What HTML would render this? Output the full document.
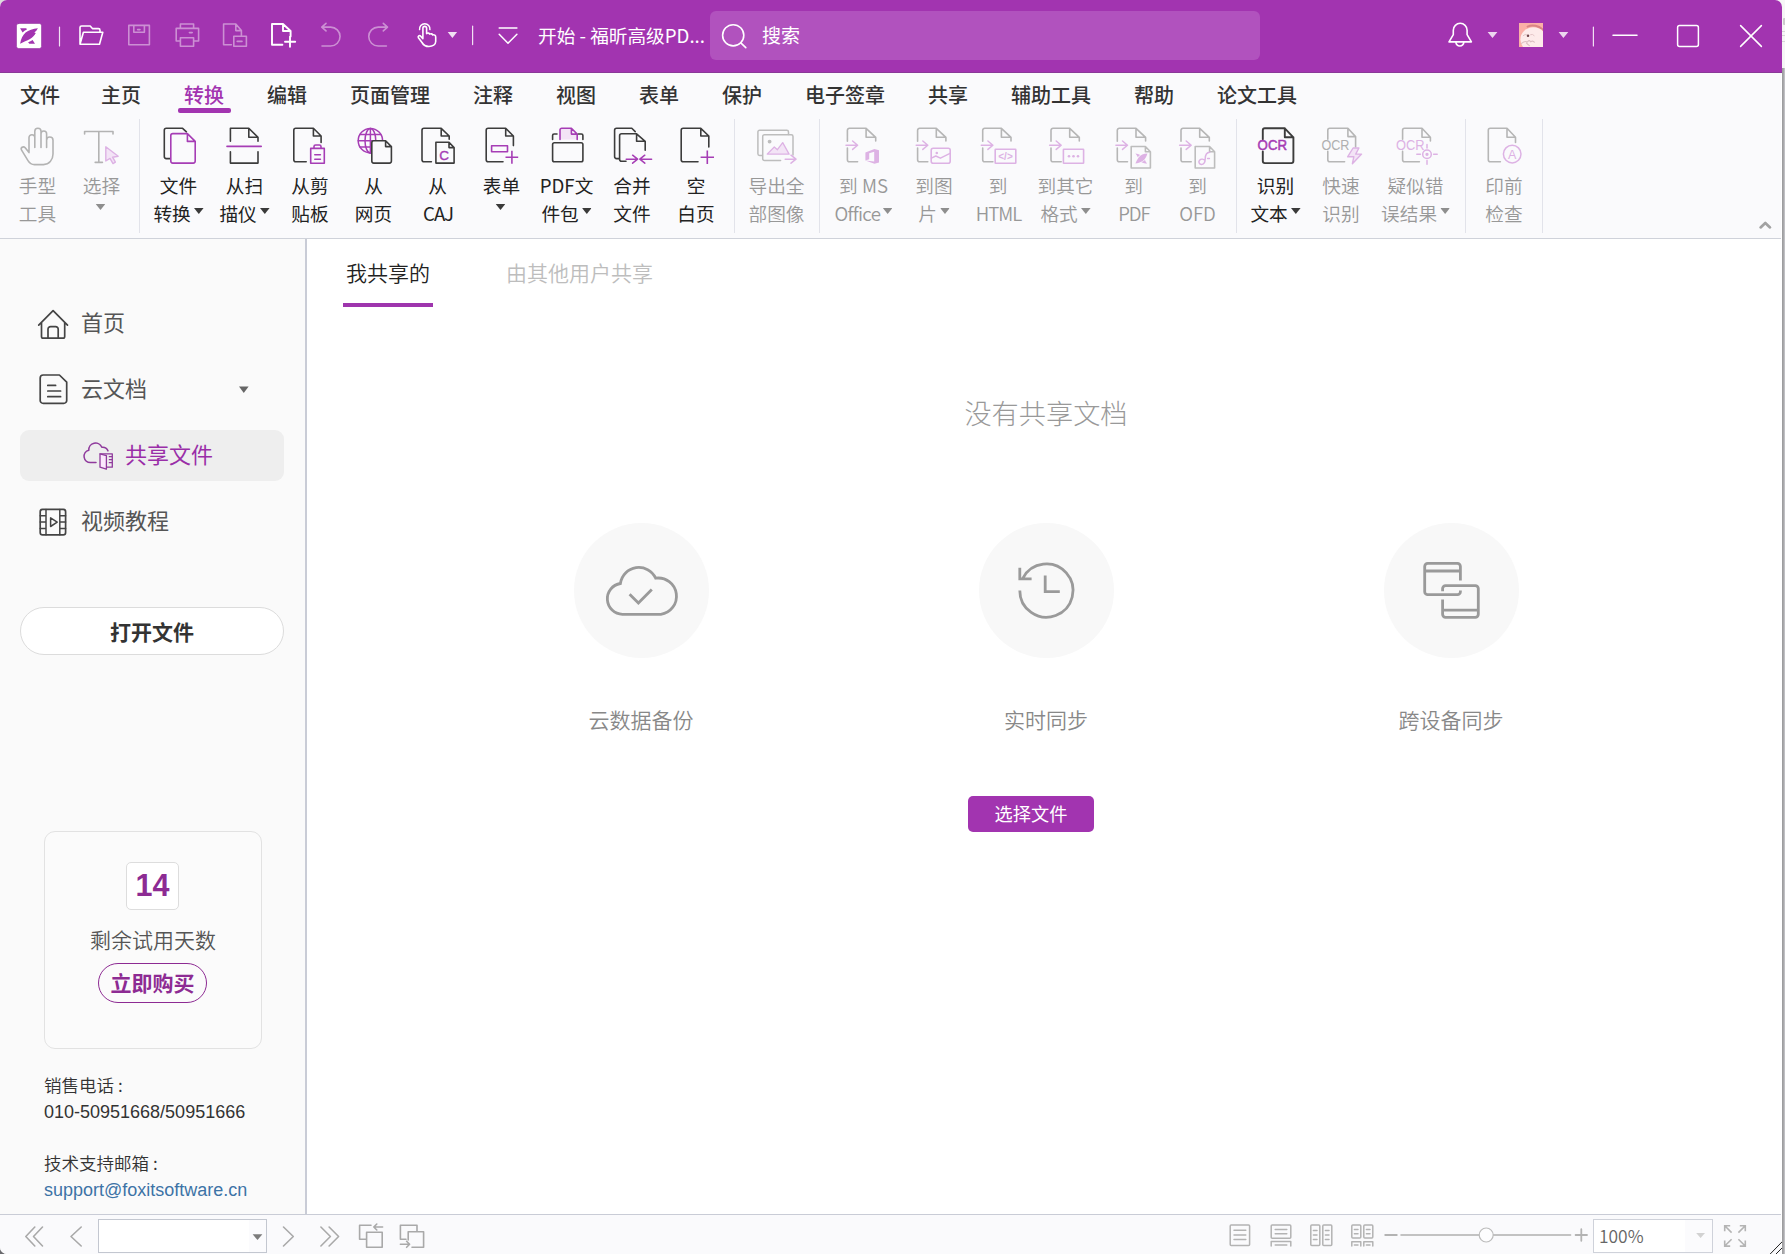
<!DOCTYPE html>
<html lang="zh-CN">
<head>
<meta charset="utf-8">
<title>开始 - 福昕高级PDF编辑器</title>
<style>
html,body{margin:0;padding:0;}
body{width:1785px;height:1254px;overflow:hidden;position:relative;background:#fff;
  font-family:"Liberation Sans","Noto Sans CJK SC",sans-serif;color:#222;}
.cj{font-family:"Noto Sans CJK SC","Liberation Sans",sans-serif;}
.abs{position:absolute;}
#edge{position:absolute;left:1782px;top:68px;width:3px;height:1186px;background:linear-gradient(90deg,#9e9ea0 0,#9e9ea0 1px,#a9a9ab 1px,#a9a9ab 2px,#c0c0c4 2px,#c0c0c4 3px);}
#edgew{position:absolute;left:1781px;top:74px;width:1px;height:1180px;background:#fff;}
#edgetop{position:absolute;left:1772px;top:0;width:13px;height:68px;background:#f6f6f6;}
#win{position:absolute;left:0;top:0;width:1782px;height:1254px;background:#fff;overflow:hidden;border-radius:7px 7px 0 7px;}
#cornerbl{position:absolute;left:0;top:1244px;width:10px;height:10px;background:#6a6a6e;}
#cornertl{position:absolute;left:0;top:0;width:10px;height:10px;background:#dcdcdc;}
#title{position:absolute;left:0;top:0;width:1782px;height:73px;background:#a234b0;border-bottom:1px solid #8a3898;box-sizing:border-box;}
#title .t{position:absolute;color:#fff;white-space:nowrap;}
#search{position:absolute;left:710px;top:11px;width:550px;height:49px;border-radius:6px;background:#b152be;}
#menubar{position:absolute;left:0;top:73px;width:1782px;height:165px;background:#fafafc;border-bottom:1px solid #cfd2da;}
.mi{position:absolute;top:79px;height:32px;line-height:32px;font-size:20px;font-weight:500;color:#333;white-space:nowrap;font-family:"Noto Sans CJK SC","Liberation Sans",sans-serif;}
.mi.on{color:#a234b0;}
#menuul{position:absolute;left:178px;top:108.4px;width:53px;height:4.2px;border-radius:2px;background:#a234b0;}
.rsep{position:absolute;top:119px;width:1px;height:114px;background:#e2e3ea;}
.rb{position:absolute;top:171px;transform:translateX(-50%);text-align:center;font-size:18.67px;line-height:28px;color:#222;white-space:nowrap;font-family:"Noto Sans CJK SC","Liberation Sans",sans-serif;}
.rb.d{color:#989898;font-weight:350;}
.rb i{display:inline-block;width:9.6px;height:6px;margin-left:3.3px;background:#3a3a3a;clip-path:polygon(0 0,100% 0,50% 100%);vertical-align:middle;position:relative;top:-5px;}
.rb.d i{background:#8e8e8e;}
.rb i.s{margin-left:-2px;top:-9px;}
#side{position:absolute;left:0;top:239px;width:305px;height:975px;background:#fafafa;border-right:2px solid #c9ccd6;}
.si{position:absolute;left:81px;font-size:22px;line-height:30px;height:30px;color:#555;white-space:nowrap;font-family:"Noto Sans CJK SC","Liberation Sans",sans-serif;}
#sel{position:absolute;left:20px;top:430px;width:264px;height:51px;border-radius:9px;background:#eeeeee;}
#openbtn{position:absolute;left:20px;top:607px;width:262px;height:46px;border:1px solid #dcdcdc;border-radius:24px;background:#fff;text-align:center;line-height:46px;font-size:21px;font-weight:bold;color:#333;font-family:"Noto Sans CJK SC","Liberation Sans",sans-serif;}
#trial{position:absolute;left:44px;top:831px;width:216px;height:216px;border:1px solid #e2e2e2;border-radius:11px;background:#fbfbfb;}
#daybox{position:absolute;left:126px;top:862px;width:51px;height:46px;border:1px solid #dddddd;border-radius:5px;background:#fff;text-align:center;line-height:44px;font-size:30.5px;font-weight:bold;color:#8d2b93;font-family:"Liberation Sans",sans-serif;}
#trialtxt{position:absolute;left:44px;top:923.5px;width:218px;text-align:center;font-size:21px;line-height:30px;color:#555;font-weight:350;font-family:"Noto Sans CJK SC","Liberation Sans",sans-serif;}
#buy{position:absolute;left:98px;top:963px;width:107px;height:38px;border:1.5px solid #8d2b93;border-radius:21px;text-align:center;line-height:37px;font-size:21px;font-weight:bold;color:#8d2b93;font-family:"Noto Sans CJK SC","Liberation Sans",sans-serif;}
.ct.cj{font-weight:350;}
.ct{position:absolute;left:44px;font-size:18px;line-height:26px;height:26px;color:#333;white-space:nowrap;}
#main{position:absolute;left:307px;top:239px;width:1475px;height:975px;background:#fff;}
.tab{position:absolute;top:256px;font-weight:350;font-size:21px;line-height:32px;white-space:nowrap;font-family:"Noto Sans CJK SC","Liberation Sans",sans-serif;}
#tabul{position:absolute;left:343px;top:303px;width:90px;height:4px;background:#9e35ad;}
#empty{position:absolute;left:746px;top:392px;width:600px;text-align:center;font-size:27.2px;line-height:40px;color:#999;font-weight:300;font-family:"Noto Sans CJK SC","Liberation Sans",sans-serif;}
.circ{position:absolute;top:523px;width:135px;height:135px;border-radius:50%;background:#f8f8f8;}
.flab{position:absolute;top:704px;width:300px;text-align:center;font-size:21px;line-height:30px;color:#888;font-weight:350;font-family:"Noto Sans CJK SC","Liberation Sans",sans-serif;}
#pick{position:absolute;left:968px;top:796px;width:126px;height:36px;border-radius:5px;background:#a234b0;color:#fff;text-align:center;line-height:35px;font-size:18.2px;font-family:"Noto Sans CJK SC","Liberation Sans",sans-serif;}
#status{position:absolute;left:0;top:1214px;width:1782px;height:40px;background:#fafafc;border-top:1px solid #c9ccd6;box-sizing:border-box;}
#pgbox{position:absolute;left:98px;top:1219px;width:167px;height:32px;border:1px solid #c3c7d0;background:linear-gradient(90deg,#fff 0,#fff 150px,#fbfbfd 150px);}
#zmbox{position:absolute;left:1593px;top:1219px;width:118px;height:32px;border:1px solid #cfd2da;background:linear-gradient(90deg,#fff 0,#fff 91px,#fbfbfd 91px);}
#zmtxt{position:absolute;left:1599px;top:1223px;font-size:17.4px;line-height:26px;color:#666;font-weight:350;font-family:"Noto Sans CJK SC","Liberation Sans",sans-serif;}
#ico{position:absolute;left:0;top:0;width:1785px;height:1254px;pointer-events:none;}
</style>
</head>
<body>
<div id="edgetop"></div>
<div id="edge"></div>
<div style="position:absolute;left:1783px;top:18px;width:2px;height:7px;background:#cbcbcb;border-radius:1px 0 0 1px"></div>
<div style="position:absolute;left:1782px;top:31px;width:3px;height:1px;background:#d6d6d6"></div>
<div style="position:absolute;left:1782px;top:35px;width:3px;height:1px;background:#d6d6d6"></div>
<div style="position:absolute;left:1782px;top:41px;width:3px;height:1px;background:#d6d6d6"></div>
<div id="cornertl"></div>
<div id="cornerbl"></div>
<div id="win">
<div id="title">
  <div id="search"></div>
  <div class="t cj" style="left:538px;top:21px;font-size:18.67px;line-height:28px;">开始 - 福昕高级PD...</div>
  <div class="t cj" style="left:762px;top:21px;font-size:19px;line-height:28px;">搜索</div>
</div>
<div id="menubar"></div>
<div class="mi" style="left:20px">文件</div>
<div class="mi" style="left:101px">主页</div>
<div class="mi on" style="left:184px">转换</div>
<div class="mi" style="left:267px">编辑</div>
<div class="mi" style="left:350px">页面管理</div>
<div class="mi" style="left:473px">注释</div>
<div class="mi" style="left:556px">视图</div>
<div class="mi" style="left:639px">表单</div>
<div class="mi" style="left:722px">保护</div>
<div class="mi" style="left:805px">电子签章</div>
<div class="mi" style="left:928px">共享</div>
<div class="mi" style="left:1011px">辅助工具</div>
<div class="mi" style="left:1134px">帮助</div>
<div class="mi" style="left:1217px">论文工具</div>
<div id="menuul"></div>

<div class="rsep" style="left:139px"></div>
<div class="rsep" style="left:734px"></div>
<div class="rsep" style="left:819px"></div>
<div class="rsep" style="left:1236px"></div>
<div class="rsep" style="left:1465px"></div>
<div class="rsep" style="left:1542px"></div>

<div class="rb d" style="left:37.5px">手型<br>工具</div>
<div class="rb d" style="left:101.5px">选择<br><i class="s"></i></div>
<div class="rb" style="left:178.5px">文件<br>转换<i></i></div>
<div class="rb" style="left:244.5px">从扫<br>描仪<i></i></div>
<div class="rb" style="left:310px">从剪<br>贴板</div>
<div class="rb" style="left:373.5px">从<br>网页</div>
<div class="rb" style="left:437.5px">从<br><span style="letter-spacing:-1.1px;margin-right:-1.1px">CAJ</span></div>
<div class="rb" style="left:501.5px">表单<br><i class="s"></i></div>
<div class="rb" style="left:566.5px">PDF文<br>件包<i></i></div>
<div class="rb" style="left:632px">合并<br>文件</div>
<div class="rb" style="left:696px">空<br>白页</div>
<div class="rb d" style="left:776.5px">导出全<br>部图像</div>
<div class="rb d" style="left:863.5px">到 MS<br><span style="letter-spacing:-0.7px;margin-right:-0.7px">Office</span><i></i></div>
<div class="rb d" style="left:934px">到图<br>片<i></i></div>
<div class="rb d" style="left:998px">到<br><span style="letter-spacing:-1px;margin-right:-1px">HTML</span></div>
<div class="rb d" style="left:1065.5px">到其它<br>格式<i></i></div>
<div class="rb d" style="left:1133.5px">到<br><span style="letter-spacing:-1px;margin-right:-1px">PDF</span></div>
<div class="rb d" style="left:1197.5px">到<br>OFD</div>
<div class="rb" style="left:1275.5px">识别<br>文本<i></i></div>
<div class="rb d" style="left:1341px">快速<br>识别</div>
<div class="rb d" style="left:1415.5px">疑似错<br>误结果<i></i></div>
<div class="rb d" style="left:1504px">印前<br>检查</div>

<div id="side"></div>
<div class="si" style="top:306px">首页</div>
<div class="si" style="top:372px">云文档</div>
<div id="sel"></div>
<div class="si" style="top:438px;left:125px;color:#9a2ea8">共享文件</div>
<div class="si" style="top:504px">视频教程</div>
<div id="openbtn">打开文件</div>
<div id="trial"></div>
<div id="daybox">14</div>
<div id="trialtxt">剩余试用天数</div>
<div id="buy">立即购买</div>
<div class="ct cj" style="top:1072px;font-size:17.5px">销售电话<span style="margin-left:4px">:</span></div>
<div class="ct" style="top:1099px">010-50951668/50951666</div>
<div class="ct cj" style="top:1150px;font-size:17.5px">技术支持邮箱<span style="margin-left:4px">:</span></div>
<div class="ct" style="top:1177px;color:#3d73a6">support@foxitsoftware.cn</div>

<div id="main"></div>
<div class="tab" style="left:346px;color:#222">我共享的</div>
<div class="tab" style="left:506px;color:#bdbdbd">由其他用户共享</div>
<div id="tabul"></div>
<div id="empty">没有共享文档</div>
<div class="circ" style="left:574px"></div>
<div class="circ" style="left:979px"></div>
<div class="circ" style="left:1384px"></div>
<div class="flab" style="left:491px">云数据备份</div>
<div class="flab" style="left:896px">实时同步</div>
<div class="flab" style="left:1301px">跨设备同步</div>
<div id="pick">选择文件</div>

<div id="status"></div>
<div id="edgew"></div>
<div id="pgbox"></div>
<div id="zmbox"></div>
<div id="zmtxt">100%</div>
<svg id="ico" width="1785" height="1254" viewBox="0 0 1785 1254" fill="none" stroke-linecap="round" stroke-linejoin="round">
<!-- title bar icons -->
<g stroke="#fff" stroke-width="1.6">
  <rect x="16.5" y="23.5" width="25" height="25" rx="2.2" fill="#fff" stroke="#8f2d9c" stroke-opacity=".55" stroke-width="1"/>
  <g fill="#a234b0" stroke="none">
    <path d="M37.9 28.2 C33 28.6 28.5 30.2 25.6 32.6 C22.6 35.2 21 39 20.1 43.8 C23.5 41.8 27 40.6 30 39 C32.6 37.6 34.6 35.6 35.8 33.1 L34.3 32.6 C35.8 31.4 37 30 37.9 28.2 Z"/>
    <path d="M20.1 28.2 H26.3 L26.9 29.5 C25.2 30.3 23.8 31.3 22.6 32.5 Z"/>
    <path d="M32.6 39.9 L35 43.7 H29.3 L28.1 42.3 C29.8 41.7 31.3 40.9 32.6 39.9 Z"/>
  </g>
  <path d="M59.5 27 V46" stroke-width="1.2" opacity=".85"/>
  <!-- open folder -->
  <path d="M80 44 V27.6 a1.6 1.6 0 0 1 1.6-1.6 H90.2 l2.2 2.6 H98.4 a1.6 1.6 0 0 1 1.6 1.6 V32.2 M80 44.2 L83.4 32.3 H102.8 L99.5 44.2 Z"/>
  <g opacity=".45">
    <!-- save -->
    <path d="M128.8 25.4 H149.4 V44.8 H128.8 Z M133.8 25.4 V32.2 H144.4 V25.4 M137.6 29.6 H140"/>
    <!-- print -->
    <path d="M180.4 28.4 V24 H193.6 V28.4 M180.4 41 H176.2 V28.4 H198.6 V41 H193.6 M180.4 37.8 H193.6 V46.2 H180.4 Z M189.4 32.6 H192.2"/>
    <!-- doc minus -->
    <path d="M231.4 44.8 H223.6 V24 H235.8 L241.4 30.6 V36 M235.8 24 V30.6 H241.4 M233.8 36.2 H246.4 V46.2 H233.8 Z M237.2 41.4 H242"/>
  </g>
  <!-- new doc -->
  <path d="M282.4 44.8 H272 V24 H283 L290.6 31 V36.6 M283 24 V31 H290.6 M290 36.6 V46.8 M285 41.7 H295.2" stroke-width="1.9"/>
  <g opacity=".45">
    <path d="M322 46 H330.6 a9.45 9.45 0 0 0 0-18.9 H321.8 M326 23.3 L321.8 27.1 L326 30.9"/>
    <path d="M386.4 46 H378.2 a9.45 9.45 0 0 1 0-18.9 H387.4 M383.3 23.3 L387.5 27.1 L383.3 30.9"/>
  </g>
  <!-- touch hand -->
  <path d="M419.6 29.6 a5.2 5.2 0 1 1 10.3 0" stroke-width="1.5"/>
  <path d="M422.9 38 V28.2 a1.85 1.85 0 0 1 3.7 0 V33.6 c1.1-.9 2.7-.6 3.1.5 c1.2-.7 2.6-.2 3 .8 c1.6-.4 3 .5 3 2 V41.6 c0 3-3 4.9-6.8 4.9 c-3.4 0-5.4-1.2-6.9-4 L418.4 37.8 c-.8-1.6 1-2.8 2.3-1.6 L422.9 38.6" stroke-width="1.6"/>
  <path d="M447.7 32.1 H457.1 L452.4 37.9 Z" fill="#fff" stroke="none" opacity=".85"/>
  <path d="M472.6 26.2 V44.6" stroke-width="1.2" opacity=".85"/>
  <path d="M499.2 28.1 H516.9 M499.2 34.2 L508 43.2 L516.9 34.2" stroke-width="1.5"/>
  <!-- search -->
  <circle cx="733.2" cy="35.3" r="10.6" stroke-width="1.6"/>
  <path d="M740.8 42.8 L745.8 47.6" stroke-width="1.6"/>
  <!-- bell -->
  <path d="M1449 41.9 L1453.3 34.6 V30.2 a6.9 6.9 0 0 1 13.8 0 V34.6 L1471.4 41.9 Z M1455.8 42.2 a4.1 4.5 0 0 0 8.1 0" stroke-width="1.6"/>
  <path d="M1487.6 32.1 H1497.4 L1492.5 38 Z M1558.6 32.1 H1568.3 L1563.4 38 Z" fill="#fff" stroke="none" opacity=".8"/>
  <path d="M1593.4 27 V46" stroke-width="1.2" opacity=".85"/>
  <path d="M1613 35.2 H1637" stroke-width="1.5"/>
  <rect x="1677.6" y="25.6" width="20.8" height="20.8" rx="2" stroke-width="1.5"/>
  <path d="M1740.6 25.6 L1761.4 46.4 M1761.4 25.6 L1740.6 46.4" stroke-width="1.5"/>
</g>
<!-- avatar -->
<defs><clipPath id="avc"><rect x="1519" y="23" width="24" height="24"/></clipPath></defs>
<g stroke="none" clip-path="url(#avc)">
  <rect x="1519" y="23" width="24" height="24" fill="#fbb0a6"/>
  <path d="M1527.6 26.6 C1532 24.6 1539 25.4 1543.4 30.2" stroke="#d98484" stroke-width="2" fill="none"/>
  <ellipse cx="1533.4" cy="39.6" rx="13" ry="12.4" fill="#fdebea"/>
  <circle cx="1528" cy="35.8" r="1.25" fill="#6d4248"/>
  <path d="M1523.2 35.6 q2-2 3.6-.8 M1530.6 34.6 q2-1 3.6 1" stroke="#e3c4c6" stroke-width="1" fill="none"/>
  <path d="M1521.5 43.4 q3.4-3 6-1.4 q1.4-2.6 3.2-.2 q2-1.6 3.6.4 M1526.4 43 q1.6 1.6 3 2.6" stroke="#dcc0c2" stroke-width="1.1" fill="none"/>
</g>
<!-- ribbon icons group 1 -->
<g stroke-width="1.6" font-family="Liberation Sans, sans-serif">
  <!-- hand tool (disabled) -->
  <path stroke="#b3b3b3" stroke-width="1.6" d="M29 152.6 V137.6 a2.9 2.9 0 0 1 5.8 0 V147.5 M34.8 137.6 V131.3 a3.1 3.1 0 0 1 6.2 0 V147.5 M41 133.8 a2.8 2.8 0 0 1 5.6 0 V147.5 M46.6 140.2 a3.2 3.2 0 0 1 6.4 0 V154 c0 6-4 10.6-9.5 10.6 H34.5 c-3 0-5-1.5-6.5-4 L21.6 150.2 c-1.4-2.4 1.6-4.6 3.6-2.4 L29 152.6"/>
  <!-- select text (disabled) -->
  <path stroke="#b3b3b3" stroke-width="1.6" d="M84.6 134 V131.5 H113 V134 M98.8 131.5 V162.4 M95.2 162.4 H102.4"/>
  <path stroke="#ddb2e4" stroke-width="1.4" fill="#f3e4f6" d="M105.8 146.8 V161 L110 158.4 L113 163.6 L115.4 162.2 L112.6 157.2 L118.2 156.2 Z"/>
  <!-- file convert -->
  <path stroke="#3c3c3c" d="M170 158.6 H166.3 a2 2 0 0 1 -2-2 V130.3 a2 2 0 0 1 2-2 H182.6 L186.4 131.8"/>
  <path stroke="#a63db5" d="M172.8 133.6 H187.4 L195.2 141.4 V161.1 a2 2 0 0 1 -2 2 H172.8 a2 2 0 0 1 -2-2 V135.6 a2 2 0 0 1 2-2 Z M187.4 133.6 V141.4 H195.2"/>
  <!-- from scanner -->
  <path stroke="#3c3c3c" d="M230.4 141.2 V128.3 H248.8 L258 137.3 V141.2 M248.8 128.3 V137.3 H258 M230.4 151.8 V163.1 H258 V151.8"/>
  <path stroke="#a63db5" d="M227 146.4 H261.2"/>
  <!-- from clipboard -->
  <path stroke="#3c3c3c" d="M306.2 161.8 H295.8 a2 2 0 0 1 -2-2 V130.3 a2 2 0 0 1 2-2 H313.4 L321.1 136 V142.4 M313.4 128.3 V136 H321.1"/>
  <path stroke="#a63db5" d="M310.7 148.4 H324.3 V163.3 H310.7 Z M314 148.2 V146.6 a1.6 1.6 0 0 1 1.6-1.6 H319.4 a1.6 1.6 0 0 1 1.6 1.6 V148.2 M314.8 154.7 H320.4 M314.8 159.2 H320.4"/>
  <!-- from web -->
  <g stroke="#a63db5" stroke-width="1.5">
    <circle cx="370.4" cy="140.7" r="12.2"/>
    <ellipse cx="370.4" cy="140.7" rx="5.4" ry="12.2"/>
    <path d="M358.2 140.7 H382.6 M360 134.4 H380.8 M360 147 H380.8 M370.4 128.5 V152.9"/>
  </g>
  <path stroke="#3c3c3c" fill="#fafafc" d="M373.8 140.7 H385.6 L391.4 146.6 V161.1 a2 2 0 0 1 -2 2 H373.8 a2 2 0 0 1 -2-2 V142.7 a2 2 0 0 1 2-2 Z M385.6 140.7 V146.6 H391.4"/>
  <!-- from CAJ -->
  <path stroke="#3c3c3c" d="M431.4 161.8 H424 a2 2 0 0 1 -2-2 V130.3 a2 2 0 0 1 2-2 H441.2 L449.2 136 V139.2 M441.2 128.3 V136 H449.2"/>
  <path stroke="#3c3c3c" d="M435.9 142.3 H449 L454.1 147.6 V163.1 H435.9 Z M449 142.3 V147.6 H454.1"/>
  <text x="444" y="159.6" font-size="13.5" fill="#a63db5" stroke="#a63db5" stroke-width="0.4" text-anchor="middle">C</text>
  <!-- form -->
  <path stroke="#3c3c3c" d="M503 161.8 H488.2 a2 2 0 0 1 -2-2 V130.3 a2 2 0 0 1 2-2 H505.7 L513.4 136 V145.6 M505.7 128.3 V136 H513.4"/>
  <path stroke="#a63db5" d="M491.6 145.8 H507.5 V151.7 H491.6 Z "/>
  <path stroke="#a63db5" stroke-linecap="butt" d="M511.9 150.8 V163.8 M505.5 157.3 H518.2"/>
  <!-- pdf portfolio -->
  <path stroke="#a63db5" fill="#f3e4f6" d="M560 139.5 V130 a1.7 1.7 0 0 1 1.7-1.7 H571.4 L577.2 134.1 V139.5 M571.4 128.3 V134.1 H577.2"/>
  <path stroke="#3c3c3c" d="M552.6 139.4 V135.5 a1.5 1.5 0 0 1 1.5-1.5 H557 M578.4 134 H581.4 a1.5 1.5 0 0 1 1.5 1.5 V139.4"/>
  <rect stroke="#3c3c3c" x="552.6" y="142.8" width="30.3" height="19" rx="1.8"/>
  <!-- merge -->
  <path stroke="#3c3c3c" d="M619 158.6 H616.6 a2 2 0 0 1 -2-2 V130.3 a2 2 0 0 1 2-2 H631.8 L635.2 131.6"/>
  <path stroke="#3c3c3c" d="M626 161.3 H621.6 a2 2 0 0 1 -2-2 V135.8 a2 2 0 0 1 2-2 H636.6 L645.2 141.3 V150.2 M636.6 133.8 V141.3 H645.2"/>
  <path stroke="#a63db5" stroke-width="1.5" d="M626.2 159.2 H637.6 M632.6 155.2 L637.6 159.2 L632.6 163.2 M651.6 159.2 H639.8 M644.8 155.2 L639.8 159.2 L644.8 163.2"/>
  <!-- blank page -->
  <path stroke="#3c3c3c" d="M698 161.8 H683.2 a2 2 0 0 1 -2-2 V130.3 a2 2 0 0 1 2-2 H700.8 L708.8 136 V147 M700.8 128.3 V136 H708.8"/>
  <path stroke="#a63db5" stroke-linecap="butt" d="M707.3 150.6 V163.9 M700.6 157.3 H714"/>
  <!-- export all images (disabled) -->
  <g stroke="#bdbdbd" stroke-width="1.5">
    <path d="M762.4 155.4 H759.6 a1.7 1.7 0 0 1 -1.7-1.7 V131.9 a1.7 1.7 0 0 1 1.7-1.7 H786.8 a1.7 1.7 0 0 1 1.7 1.7 V134.6"/>
    <path d="M780.6 160.5 H764.4 a1.7 1.7 0 0 1 -1.7-1.7 V136.5 a1.7 1.7 0 0 1 1.7-1.7 H791.3 a1.7 1.7 0 0 1 1.7 1.7 V155"/>
    <circle cx="769.6" cy="141.6" r="1.2" fill="#bdbdbd"/>
  </g>
  <path stroke="#ddb2e4" stroke-width="1.3" fill="#f3e4f6" d="M767.2 154.1 L774.3 147 L777.4 149.7 L782.7 142.6 L789.1 154.1 Z"/>
  <path stroke="#ddb2e4" stroke-width="1.5" d="M785.2 159.2 H796 M791 155.2 L796 159.2 L791 163.2"/>
</g>
<!-- ribbon icons group 2 : export (disabled) -->
<defs>
  <g id="todoc">
    <path stroke="#b6b6b6" d="M10.2 161.8 H2 a2 2 0 0 1 -2-2 V148 M0 141.2 V130.3 a2 2 0 0 1 2-2 H18.7 L28.3 137.3 V141 M18.7 128.3 V137.3 H28.3"/>
    <path stroke="#ddb2e4" stroke-width="1.5" d="M-1.4 145.2 H10.2 M5.2 141 L10.2 145.2 L5.2 149.4"/>
  </g>
</defs>
<g stroke-width="1.6" font-family="Liberation Sans, sans-serif">
  <use href="#todoc" x="847.4"/>
  <path fill="#ddb2e4" stroke="none" fill-rule="evenodd" d="M865.4 152.6 L874.4 149 L879 150.3 V162.6 L874.4 163.8 L865.4 160.6 L874.2 161.6 V151.8 L869.2 153.2 V159.2 L865.4 160.6 Z"/>
  <use href="#todoc" x="917.6"/>
  <rect stroke="#ddb2e4" x="931.2" y="148.3" width="19" height="15" rx="2"/>
  <circle cx="936.8" cy="153" r="1.3" fill="#ddb2e4" stroke="none"/>
  <path stroke="#ddb2e4" stroke-width="1.4" d="M931.4 158.2 L935.8 156 L940.4 158.2 L950 153.4"/>
  <use href="#todoc" x="982.7"/>
  <rect stroke="#ddb2e4" x="995.2" y="149.2" width="20.6" height="14" rx="0.5"/>
  <text x="1005.5" y="160" font-size="10" font-weight="bold" fill="#ddb2e4" stroke="none" text-anchor="middle">&lt;/&gt;</text>
  <use href="#todoc" x="1051"/>
  <rect stroke="#ddb2e4" x="1063.4" y="149.2" width="20.2" height="14" rx="0.5"/>
  <g fill="#ddb2e4" stroke="none"><circle cx="1069" cy="156.3" r="1.3"/><circle cx="1073.5" cy="156.3" r="1.3"/><circle cx="1078" cy="156.3" r="1.3"/></g>
  <use href="#todoc" x="1117.3"/>
  <path stroke="#bdbdbd" fill="#fafafc" d="M1131.2 146.5 H1145.4 L1150.4 151.8 V168 H1131.2 Z M1145.4 146.5 V151.8 H1150.4"/>
  <g fill="#ddb2e4" stroke="none">
    <path d="M1147.4 153.6 C1143.6 153.8 1140.6 155 1138.6 157.6 C1137.2 159.6 1136.2 161.8 1135.4 163.6 C1137.8 162.9 1140.2 162.5 1142.4 161.2 C1145.2 159.5 1146.6 156.8 1147.4 153.6 Z"/>
    <path d="M1135.4 153.4 C1137.2 153.5 1138.8 154 1140.2 155 C1139.2 155.6 1138.4 156.3 1137.8 157.2 C1137.2 155.8 1136.4 154.5 1135.4 153.4 Z"/>
    <path d="M1141.4 162.2 C1142.8 161.7 1144 161 1145 160.1 C1145.4 161.5 1146.2 162.7 1147.2 163.6 C1145.1 163.6 1143.2 163.1 1141.4 162.2 Z"/>
  </g>
  <use href="#todoc" x="1181"/>
  <path stroke="#bdbdbd" fill="#fafafc" d="M1195.2 146.5 H1209.6 L1214.6 151.8 V168 H1195.2 Z M1209.6 146.5 V151.8 H1214.6"/>
  <path stroke="#ddb2e4" stroke-width="1.5" d="M1209.8 152.2 C1205.4 152.4 1205.2 156 1205.2 159 C1205.2 162.6 1203.6 164.6 1201.2 164.4 C1199 164.2 1198.2 161.6 1199.6 160.2 C1201 158.8 1203.6 159.2 1205 160.4 M1207.6 158.6 H1209.4"/>
</g>
<!-- ribbon icons group 3 : OCR -->
<g stroke-width="1.7" font-family="Liberation Sans, sans-serif">
  <path stroke="#3c3c3c" stroke-width="1.9" d="M1262.8 139.2 V130.3 a2 2 0 0 1 2-2 H1284.8 L1293.4 137.3 V161.1 a2 2 0 0 1 -2 2 H1264.8 a2 2 0 0 1 -2-2 V151.4 M1284.8 128.3 V137.3 H1293.4"/>
  <text x="1257.6" y="150.2" font-size="13.8" fill="#a63db5" stroke="#a63db5" stroke-width="0.5" textLength="29.4" lengthAdjust="spacingAndGlyphs">OCR</text>
  <!-- quick ocr (disabled) -->
  <path stroke="#b6b6b6" stroke-width="1.6" d="M1327.8 139.2 V130.3 a2 2 0 0 1 2-2 H1347.9 L1355.6 136.6 V147 M1347.9 128.3 V136.6 H1355.6 M1327.8 151.4 V159.8 a2 2 0 0 0 2 2 H1344.6"/>
  <text x="1321.4" y="150.2" font-size="13.8" fill="#b0b0b0" stroke="none" textLength="28" lengthAdjust="spacingAndGlyphs">OCR</text>
  <path stroke="#ddb2e4" stroke-width="1.4" fill="#f3e4f6" d="M1353.1 148 H1358.9 L1355.7 154.1 H1361.6 L1352.4 163.7 L1353.8 156.8 H1347.6 Z"/>
  <!-- suspect (disabled) -->
  <path stroke="#b6b6b6" stroke-width="1.6" d="M1402.6 139.2 V130.3 a2 2 0 0 1 2-2 H1422 L1430.4 137.3 V141 M1422 128.3 V137.3 H1430.4 M1402.6 151.4 V159.8 a2 2 0 0 0 2 2 H1419.4"/>
  <text x="1396" y="150.2" font-size="13.8" fill="#ddb2e4" stroke="none" textLength="28.6" lengthAdjust="spacingAndGlyphs">OCR</text>
  <g stroke="#ddb2e4" stroke-width="1.5">
    <circle cx="1427" cy="154.3" r="4.3"/>
    <path d="M1427 144.4 V148 M1427 160.6 V164.2 M1416.8 154.3 H1420.4 M1433.6 154.3 H1437.2"/>
    <circle cx="1427" cy="154.3" r="0.9" fill="#ddb2e4"/>
  </g>
  <!-- preflight (disabled) -->
  <path stroke="#b6b6b6" stroke-width="1.6" d="M1500.4 161.8 H1490.3 a2 2 0 0 1 -2-2 V130.3 a2 2 0 0 1 2-2 H1507 L1515.5 137.3 V142.4 M1507 128.3 V137.3 H1515.5"/>
  <circle cx="1512.2" cy="154.1" r="8.8" stroke="#ddb2e4" stroke-width="1.5"/>
  <text x="1512.2" y="158.6" font-size="12.5" fill="#ddb2e4" stroke="none" text-anchor="middle">A</text>
  <!-- collapse chevron -->
  <path stroke="#a2a2a2" stroke-width="2.7" d="M1760.6 227.4 L1765.3 222.9 L1770 227.4"/>
</g>
<!-- sidebar icons -->
<g stroke="#444" stroke-width="1.7">
  <path d="M38.7 325.2 L53.1 310.6 L67.5 325.2 M41.5 322.8 V336.4 a1.7 1.7 0 0 0 1.7 1.7 H63 a1.7 1.7 0 0 0 1.7-1.7 V322.8 M48 338 V329.2 a2.6 2.6 0 0 1 2.6-2.6 H55.6 a2.6 2.6 0 0 1 2.6 2.6 V338"/>
  <path d="M43.2 375 H59.4 L66.7 382.2 V400.4 a3 3 0 0 1 -3 3 H43.2 a3 3 0 0 1 -3-3 V378 a3 3 0 0 1 3-3 Z M47.8 385.4 H55.6 M47.8 391 H60.6 M47.8 396.7 H60.6"/>
  <rect x="40.2" y="509.4" width="25.4" height="25.4" rx="2.4"/>
  <path d="M46 509.4 V534.8 M59.8 509.4 V534.8 M40.2 515.7 H46 M40.2 522.1 H46 M40.2 528.5 H46 M59.8 515.7 H65.6 M59.8 522.1 H65.6 M59.8 528.5 H65.6 M50.6 517.9 V526.5 L57.2 522.2 Z" stroke-width="1.5"/>
  <path d="M239 386.5 H248.6 L243.8 393 Z" fill="#666" stroke="none"/>
</g>
<g stroke="#8f3a9c" stroke-width="1.5">
  <path d="M96 462.6 H90.5 A6.3 6.3 0 0 1 88.8 450.2 A6.75 6.75 0 0 1 101.8 447.3 A6 6 0 0 1 108 450.9"/>
  <path d="M100 453.8 H112.3 V467.2 H106.6" stroke-width="1.3"/>
  <path d="M100 453.8 L106.4 455.6 V469.2 L100 467.2 Z" fill="#fbe8fd" stroke-width="1.3"/>
  <path d="M108.8 456.7 H112.3 M108.8 459.7 H112.3 M108.8 462.7 H112.3" stroke-width="1.2" stroke-linecap="butt"/>
</g>
<!-- main feature icons -->
<g stroke="#9a9a9a" stroke-width="2.8" stroke-linecap="butt" stroke-linejoin="miter">
  <path d="M622.5 614.3 A15.5 15.5 0 0 1 620.4 583.5 A18.6 18.6 0 0 1 655.7 578.2 A18.2 18.2 0 0 1 660.8 614.3 Z"/>
  <path d="M629.6 594.2 L638.4 603.1 L651.8 589.5"/>
  <path d="M1019.8 590.4 A26.6 26.6 0 1 0 1022.8 578.3 M1019.8 567.8 V578.8 H1031.6 M1045.2 575.6 V591.6 H1059.8"/>
  <path d="M1460.4 580.6 V566.4 a3 3 0 0 0 -3-3 H1427.7 a3 3 0 0 0 -3 3 V591.7 a3 3 0 0 0 3 3 H1457.4 a3 3 0 0 0 3-3 V590.6 M1424.7 571 H1460.4"/>
  <path d="M1442.6 591.2 V588.6 a3 3 0 0 1 3-3 H1475.3 a3 3 0 0 1 3 3 V614.3 a3 3 0 0 1 -3 3 H1445.6 a3 3 0 0 1 -3-3 V599.4 M1442.6 610.1 H1478.3"/>
</g>
<!-- status bar icons -->
<g stroke="#a9a9a9" stroke-width="1.6">
  <path d="M34.8 1227 L25.8 1236.5 L34.8 1246 M42.5 1227 L33.5 1236.5 L42.5 1246"/>
  <path d="M81.2 1227 L71 1236.5 L81.2 1246"/>
  <path d="M283.5 1227 L293.3 1236.5 L283.5 1246"/>
  <path d="M320.9 1227 L330.4 1236.5 L320.9 1246 M329.1 1227 L338.6 1236.5 L329.1 1246"/>
  <path d="M252.6 1234.3 H262.4 L257.5 1240 Z" fill="#7c7c7c" stroke="none"/>
  <path d="M371 1225.3 H359.6 V1239.2 H366.4 M366.6 1232.3 H382.2 V1247.2 H366.6 Z M382.6 1227 H373.8 M376.8 1224 L373.8 1227 L376.8 1230"/>
  <path d="M406 1239.2 H400.4 V1225.3 H417 V1231.4 M408.2 1240 V1231.8 H423.6 V1247.2 H412 M400.4 1244.3 H409.6 M406.6 1241.3 L409.6 1244.3 L406.6 1247.3"/>
</g>
<g stroke="#b3b3b3" stroke-width="1.5">
  <rect x="1230.2" y="1224.9" width="19.4" height="20.6" rx="1"/>
  <path d="M1234 1230.3 H1245.8 M1234 1235 H1245.8 M1234 1239.6 H1245.8"/>
  <rect x="1271.2" y="1224.9" width="19.6" height="13.4" rx="1"/>
  <path d="M1275.2 1229.4 H1286.8 M1275.2 1233.8 H1286.8 M1271.2 1246 V1241.6 H1290.8 V1246 M1275.2 1245 H1286.8"/>
  <rect x="1310.8" y="1224.9" width="9" height="20.6" rx="1"/>
  <rect x="1322.8" y="1224.9" width="9" height="20.6" rx="1"/>
  <path d="M1313.4 1230.4 H1317 M1313.4 1235 H1317 M1313.4 1239.6 H1317 M1325.4 1230.4 H1329 M1325.4 1235 H1329 M1325.4 1239.6 H1329"/>
  <rect x="1351.8" y="1224.9" width="9" height="13.2" rx="1"/>
  <rect x="1363.8" y="1224.9" width="9" height="13.2" rx="1"/>
  <path d="M1354.4 1229.6 H1358 M1354.4 1233.8 H1358 M1366.4 1229.6 H1370 M1366.4 1233.8 H1370 M1351.8 1246 V1241.8 H1360.8 V1246 M1363.8 1246 V1241.8 H1372.8 V1246 M1354.4 1245 H1358 M1366.4 1245 H1370"/>
  <path d="M1385.2 1235 H1396.8 M1575.6 1235 H1587 M1581.3 1229.2 V1240.8" stroke-width="1.8"/>
  <path d="M1401.2 1235 H1570.4" stroke="#c2c2c2" stroke-width="2"/>
  <circle cx="1486.2" cy="1235" r="7" fill="#fdfdfe" stroke="#bcbcbc" stroke-width="1.2"/>
  <path d="M1696.2 1233 H1705 L1700.6 1237.9 Z" fill="#d2d2d2" stroke="none"/>
  <g stroke="#b4b4b4" stroke-width="1.6" stroke-linecap="butt" stroke-linejoin="miter">
    <path d="M1731.6 1232.6 L1725 1226 M1730.2 1225.7 H1724.7 V1231.2"/>
    <path d="M1738.4 1232.6 L1745 1226 M1739.8 1225.7 H1745.3 V1231.2"/>
    <path d="M1731.6 1239.2 L1725 1245.8 M1730.2 1246.1 H1724.7 V1240.6"/>
    <path d="M1738.4 1239.2 L1745 1245.8 M1739.8 1246.1 H1745.3 V1240.6"/>
  </g>
  <path d="M1770.2 1254 L1782.2 1241.7 M1776 1254 L1782.2 1247.8" stroke="#222" stroke-width="1"/>
</g>
</svg>
</div>
</body>
</html>
